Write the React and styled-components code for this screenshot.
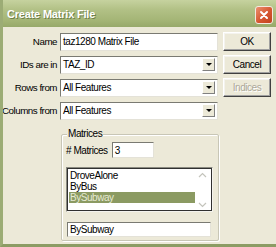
import styled, { createGlobalStyle } from 'styled-components'

const Global = createGlobalStyle`
  html, body { margin: 0; padding: 0; background: #ece9d8; }
  body {
    font-family: "Liberation Sans", Arial, sans-serif;
    font-size: 10px;
    letter-spacing: -0.45px;
    color: #000;
  }
`

const Window = styled.div`
  width: 276px;
  height: 247px;
  box-sizing: border-box;
  background: #ece9d8;
  border-left: 3px solid #9cac75;
  border-bottom: 3px solid #8c9c64;
  display: flex;
  flex-direction: column;
  overflow: hidden;
`

const TitleBar = styled.div`
  height: 27px;
  margin-left: -3px;
  flex: none;
  display: flex;
  align-items: center;
  justify-content: space-between;
  padding: 0 3px 0 7px;
  background: linear-gradient(#c6d29f, #b2c186 35%, #a4b576 75%, #97a96a);
  color: #fff;
  font-weight: bold;
  font-size: 11px;
  letter-spacing: -0.2px;
  text-shadow: 1px 1px 0 #6f7f48;
`

const CloseButton = styled.div`
  width: 16px;
  height: 16px;
  margin-top: 2px;
  border: 1px solid #f3e9e0;
  border-radius: 3px;
  background: linear-gradient(135deg, #eb9170, #d6552f 55%, #c2411f);
  display: flex;
  align-items: center;
  justify-content: center;
`

const Body = styled.div`
  flex: 1;
  display: flex;
  padding: 5px 0 0 0;
  gap: 4px;
`

const FormColumn = styled.div`
  width: 216px;
  display: flex;
  flex-direction: column;
`

const Row = styled.div`
  display: flex;
  align-items: center;
  height: 19px;
  margin-bottom: 4px;
`

const Label = styled.span`
  flex: none;
  width: 54px;
  padding-right: 3px;
  display: flex;
  justify-content: flex-end;
  font-size: 9.8px;
  letter-spacing: -0.5px;
  white-space: nowrap;
`

const TextBox = styled.div`
  box-sizing: border-box;
  width: ${p => p.$w || 158}px;
  height: ${p => p.$h || 18}px;
  margin: ${p => p.$m || '0'};
  background: #fff;
  border: 1px solid #e4e2d8;
  border-top-color: #7a7a72;
  border-left-color: #7a7a72;
  padding: 1px 2px;
  display: flex;
  align-items: center;
  white-space: nowrap;
`

const Combo = styled(TextBox)`
  justify-content: space-between;
  padding-right: 2px;
`

const DropArrow = styled.div`
  width: 13px;
  height: 13px;
  background: #ece9d8;
  border: 1px solid #fff;
  border-right-color: #808080;
  border-bottom-color: #808080;
  box-sizing: border-box;
  display: flex;
  align-items: center;
  justify-content: center;
  &::after {
    content: '';
    border-left: 3px solid transparent;
    border-right: 3px solid transparent;
    border-top: 3px solid #000;
  }
`

const ButtonColumn = styled.div`
  display: flex;
  flex-direction: column;
  gap: 4px;
`

const Button = styled.div`
  box-sizing: border-box;
  width: 48px;
  height: 19px;
  border: 1px solid #404040;
  border-top-color: #fff;
  border-left-color: #fff;
  box-shadow: inset -1px -1px 0 #a0a0a0, inset 1px 1px 0 #f4f3ee;
  background: #ece9d8;
  display: flex;
  align-items: center;
  justify-content: center;
  color: ${p => (p.$disabled ? '#aca899' : '#000')};
  text-shadow: ${p => (p.$disabled ? '1px 1px 0 #fff' : 'none')};
`

const Group = styled.div`
  position: relative;
  margin: 10px 0 0 58px;
  width: 158px;
  height: 107px;
  box-sizing: border-box;
  border: 1px solid #c8c6b6;
  box-shadow: 1px 1px 0 #fff, inset 1px 1px 0 #fff;
  border-radius: 2px;
  padding: 7px 0 0 4px;
`

const GroupLabel = styled.span`
  position: absolute;
  top: -7px;
  left: 5px;
  padding: 0 1px;
  background: #ece9d8;
`

const CountRow = styled.div`
  display: flex;
  align-items: center;
  gap: 4px;
  margin-bottom: 9px;
`

const ListBox = styled.div`
  box-sizing: border-box;
  width: 147px;
  height: 45px;
  border: 1px solid #8a8a80;
  border-right-color: #f4f3ee;
  border-bottom-color: #f4f3ee;
  box-shadow: inset 1px 1px 0 #303030, inset -1px -1px 0 #303030;
  background: #fff;
  display: flex;
  padding: 1px 2px 2px 2px;
`

const Items = styled.div`
  flex: 1;
  display: flex;
  flex-direction: column;
  padding-top: 1px;
`

const Item = styled.div`
  height: 11px;
  line-height: 11px;
  padding-left: 1px;
  background: ${p => (p.$sel ? '#8b9a62' : 'transparent')};
  color: ${p => (p.$sel ? '#e6ead4' : '#000')};
  white-space: nowrap;
`

const Scroll = styled.div`
  width: 15px;
  display: flex;
  flex-direction: column;
  justify-content: space-between;
  align-items: center;
  padding: 3px 0 1px;
`

const Title = styled.span``

const Chevron = ({ up }) => (
  <svg width="9" height="6" viewBox="0 0 9 6">
    <path
      d={up ? 'M1 5 L4.5 1.5 L8 5' : 'M1 1 L4.5 4.5 L8 1'}
      fill="none"
      stroke="#c4c4bc"
      strokeWidth="1.2"
    />
  </svg>
)

export default function App() {
  return (
    <>
      <Global />
      <Window>
        <TitleBar>
          <Title>Create Matrix File</Title>
          <CloseButton>
            <svg width="10" height="10" viewBox="0 0 10 10">
              <path d="M2 2 L8 8 M8 2 L2 8" stroke="#fff" strokeWidth="2" strokeLinecap="round" />
            </svg>
          </CloseButton>
        </TitleBar>
        <Body>
          <FormColumn>
            <Row>
              <Label>Name</Label>
              <TextBox>taz1280 Matrix File</TextBox>
            </Row>
            <Row>
              <Label>IDs are in</Label>
              <Combo>TAZ_ID<DropArrow /></Combo>
            </Row>
            <Row>
              <Label>Rows from</Label>
              <Combo>All Features<DropArrow /></Combo>
            </Row>
            <Row>
              <Label>Columns from</Label>
              <Combo>All Features<DropArrow /></Combo>
            </Row>
            <Group>
              <GroupLabel>Matrices</GroupLabel>
              <CountRow>
                <span># Matrices</span>
                <TextBox $w={42} $h={16}>3</TextBox>
              </CountRow>
              <ListBox>
                <Items>
                  <Item>DroveAlone</Item>
                  <Item>ByBus</Item>
                  <Item $sel>BySubway</Item>
                </Items>
                <Scroll>
                  <Chevron up />
                  <Chevron />
                </Scroll>
              </ListBox>
              <TextBox $w={144} $h={15} $m="10px 0 0 1px">BySubway</TextBox>
            </Group>
          </FormColumn>
          <ButtonColumn>
            <Button>OK</Button>
            <Button>Cancel</Button>
            <Button $disabled>Indices</Button>
          </ButtonColumn>
        </Body>
      </Window>
    </>
  )
}
